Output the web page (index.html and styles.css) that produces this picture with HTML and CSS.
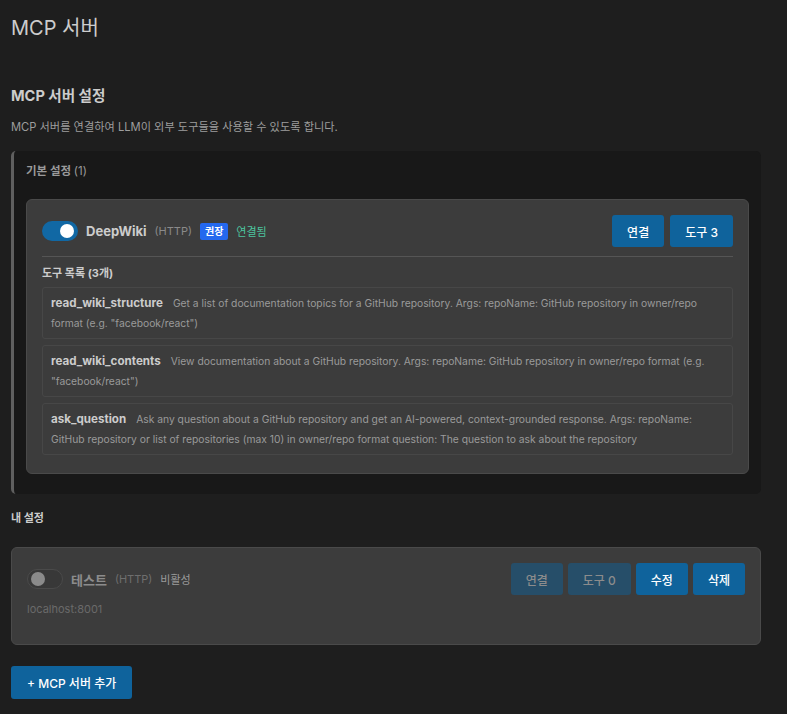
FILE: index.html
```html
<!DOCTYPE html>
<html lang="ko">
<head>
<meta charset="utf-8">
<title>MCP 서버</title>
<link rel="stylesheet" href="styles.css">
</head>
<body>
<div class="page">
  <h1 class="title">MCP 서버</h1>
  <h2 class="subtitle">MCP 서버 설정</h2>
  <p class="desc">MCP 서버를 연결하여 LLM이 외부 도구들을 사용할 수 있도록 합니다.</p>

  <section class="panel">
    <div class="panel-label">기본 설정 <span class="count">(1)</span></div>
    <div class="card">
      <div class="card-head">
        <div class="head-left">
          <span class="toggle on"><span class="knob"></span></span>
          <span class="srv-name">DeepWiki</span>
          <span class="srv-type">(HTTP)</span>
          <span class="badge">권장</span>
          <span class="status ok">연결됨</span>
        </div>
        <div class="head-right">
          <button class="btn">연결</button>
          <button class="btn">도구 3</button>
        </div>
      </div>
      <div class="tools">
        <div class="tools-title">도구 목록 (3개)</div>
        <div class="tool-list">
          <div class="tool"><span class="tool-name">read_wiki_structure</span><span class="tool-desc">Get a list of documentation topics for a GitHub repository. Args: repoName: GitHub repository in owner/repo format (e.g. "facebook/react")</span></div>
          <div class="tool"><span class="tool-name">read_wiki_contents</span><span class="tool-desc">View documentation about a GitHub repository. Args: repoName: GitHub repository in owner/repo format (e.g. "facebook/react")</span></div>
          <div class="tool"><span class="tool-name">ask_question</span><span class="tool-desc">Ask any question about a GitHub repository and get an AI-powered, context-grounded response. Args: repoName: GitHub repository or list of repositories (max 10) in owner/repo format question: The question to ask about the repository</span></div>
        </div>
      </div>
    </div>
  </section>

  <div class="section-label">내 설정</div>
  <div class="card card-mine">
    <div class="card-head">
      <div class="head-left">
        <span class="toggle off"><span class="knob"></span></span>
        <span class="srv-name dim">테스트</span>
        <span class="srv-type dim">(HTTP)</span>
        <span class="status off">비활성</span>
      </div>
      <div class="head-right tight">
        <button class="btn disabled">연결</button>
        <button class="btn disabled">도구 0</button>
        <button class="btn">수정</button>
        <button class="btn">삭제</button>
      </div>
    </div>
    <div class="host">localhost:8001</div>
  </div>

  <button class="btn add">+ MCP 서버 추가</button>
</div>
</body>
</html>
```

FILE: styles.css
```css
* { box-sizing: border-box; }
html, body {
  margin: 0;
  background: #1e1e1e;
}
body {
  font-family: Inter, "Noto Sans CJK KR", "Noto Sans", sans-serif;
  color: #cccccc;
}
.page {
  padding: 16px 26px 16px 11px;
}
.title {
  margin: 0 0 46px;
  font-size: 20px;
  line-height: 24px;
  font-weight: 400;
  color: #cccccc;
}
.subtitle {
  margin: 0 0 12px;
  font-size: 14.6px;
  line-height: 20px;
  font-weight: 700;
  color: #cccccc;
}
.desc {
  margin: 0 0 15px;
  font-size: 11.2px;
  line-height: 18px;
  color: #9d9d9d;
}
.panel {
  background: #181818;
  border-left: 3px solid #5f5f5f;
  border-radius: 5px;
  padding: 12px 12px 20px 12px;
}
.panel-label {
  font-size: 11.5px;
  line-height: 16px;
  font-weight: 700;
  color: #9a9a9a;
  margin-bottom: 20px;
}
.panel-label .count { font-weight: 400; }
.card {
  background: #3c3c3c;
  border: 1px solid #4a4a4a;
  border-radius: 6px;
  padding: 15px 15px 18px;
}
.card-head {
  display: flex;
  align-items: center;
  justify-content: space-between;
  height: 32px;
}
.head-left {
  display: flex;
  align-items: center;
  gap: 8px;
}
.head-right {
  display: flex;
  gap: 6px;
}
.head-right.tight { gap: 5px; }
.toggle {
  position: relative;
  width: 36px;
  height: 20px;
  border-radius: 10px;
  display: inline-block;
  flex: none;
}
.toggle .knob {
  position: absolute;
  top: 3px;
  width: 14px;
  height: 14px;
  border-radius: 50%;
}
.toggle.on { background: #1168a4; }
.toggle.on .knob { right: 4px; background: #ffffff; }
.toggle.off { background: #383838; border: 1px solid #4a4a4a; }
.toggle.off .knob { left: 3px; top: 2px; background: #8a8a8a; }
.srv-name {
  font-size: 13px;
  font-weight: 700;
  color: #cccccc;
}
.srv-name.dim { color: #8c8c8c; }
.srv-type {
  font-size: 11px;
  color: #8a8a8a;
}
.srv-type.dim { color: #6e6e6e; }
.badge {
  background: #2468ee;
  color: #ffffff;
  font-size: 10px;
  font-weight: 700;
  line-height: 17px;
  height: 17px;
  padding: 0 5px;
  border-radius: 2px;
}
.status {
  font-size: 11px;
}
.status.ok { color: #4cc59f; }
.status.off { color: #9a9a9a; }
.btn {
  font-family: inherit;
  height: 32px;
  padding: 0 15px;
  border: none;
  border-radius: 3px;
  background: #0f639c;
  color: #ffffff;
  font-size: 12px;
  font-weight: 500;
  cursor: pointer;
}
.btn.disabled {
  background: #264e69;
  color: #8c8c8c;
}
.tools {
  margin-top: 9px;
  border-top: 1px solid #555555;
  padding-top: 8px;
}
.tools-title {
  font-size: 11px;
  line-height: 16px;
  font-weight: 700;
  color: #cccccc;
  margin-bottom: 6px;
}
.tool-list {
  display: flex;
  flex-direction: column;
  gap: 6px;
}
.tool {
  border: 1px solid #474747;
  border-radius: 3px;
  padding: 5px 8px;
  font-size: 10.3px;
  line-height: 20px;
  height: 52px;
}
.tool-name {
  font-size: 11.6px;
  line-height: 1;
  font-weight: 700;
  color: #cccccc;
  margin-right: 10px;
}
.tool-desc {
  color: #9a9a9a;
}
.section-label {
  margin: 16px 0 21px;
  font-size: 11px;
  line-height: 16px;
  font-weight: 700;
  color: #cccccc;
}
.card-mine {
  padding: 15px 15px 27px;
}
.host {
  margin-top: 6px;
  font-size: 11px;
  line-height: 16px;
  color: #6a6a6a;
}
.add {
  margin-top: 21px;
  height: 33px;
  padding: 0 16px;
}
```
